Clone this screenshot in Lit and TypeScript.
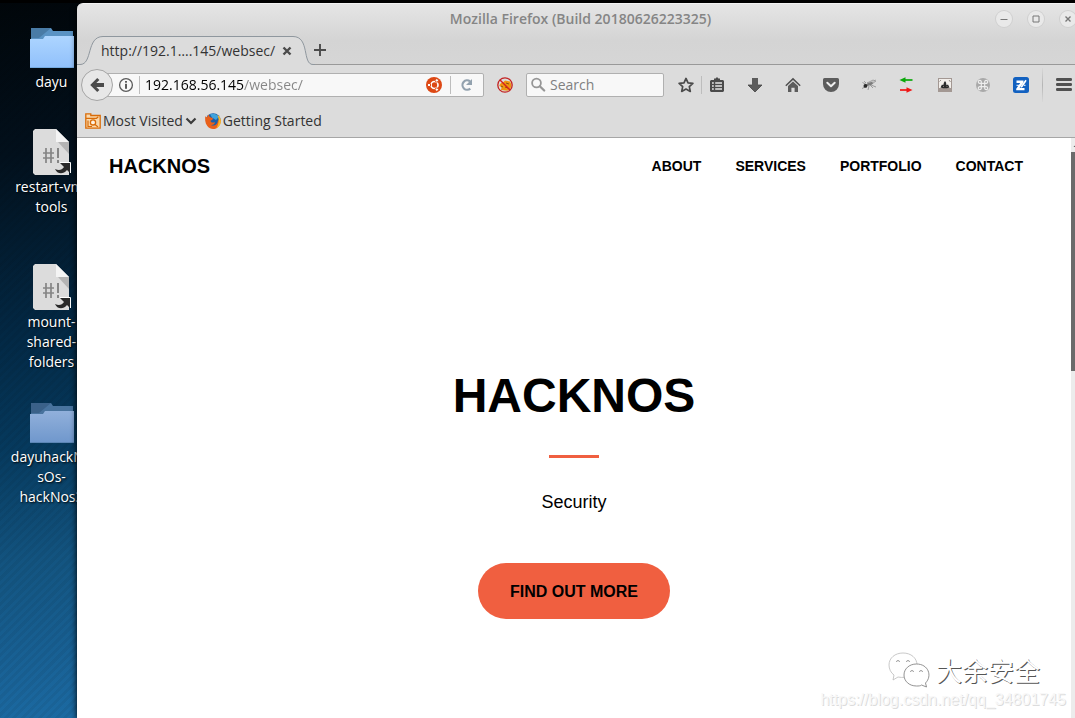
import { LitElement, html, css, svg, TemplateResult } from "lit";
import { customElement } from "lit/decorators.js";

const chromeFont = css`"Open Sans", "Noto Sans", sans-serif`;

const icon = (body: unknown, size = 16): TemplateResult => html`
  <svg width=${size} height=${size} viewBox="0 0 16 16" aria-hidden="true">${body}</svg>
`;

const icons = {
  back: svg`<path d="M8.2 1 1.2 8l7 7 2.2-2.1L7.3 9.9H15V6.1H7.3l3.1-3z" fill="#4b4b4b"/>`,
  info: svg`<circle cx="8" cy="8" r="6.4" fill="none" stroke="#5a5a5a" stroke-width="1.3"/>
    <rect x="7.1" y="4" width="1.8" height="1.7" fill="#4a4a4a"/><rect x="7.1" y="6.8" width="1.8" height="5" fill="#4a4a4a"/>`,
  ubuntu: svg`<circle cx="8" cy="8" r="8" fill="#dd4814"/>
    <circle cx="8.5" cy="8" r="3.5" fill="none" stroke="#fff" stroke-width="1.7"/>
    <g stroke="#dd4814" stroke-width="1"><circle cx="3" cy="8" r="1.7" fill="#fff"/>
    <circle cx="10.8" cy="3.4" r="1.7" fill="#fff"/><circle cx="10.8" cy="12.6" r="1.7" fill="#fff"/></g>`,
  reload: svg`<path d="M11.300 11.600A4.700 4.700 0 1 1 11 4.300" fill="none" stroke="#92a1ae" stroke-width="2.200"/>
    <path d="M13 2v6H7z" fill="#92a1ae"/>`,
  noscript: svg`<path d="M2.200 8.500 4 6l2-.5L8 3.500l5 1L14.500 8l-1 3.500-3 2.300L4 13l.5-2.500z" fill="#f09410"/>
    <path d="m4 9 2 1m3-4 3 1m-4 3 3 1" stroke="#8b520b" stroke-width="1"/>
    <circle cx="8" cy="8" r="7.200" fill="none" stroke="#c32222" stroke-width="1.300"/>
    <path d="m3 3 10 10" stroke="#d42020" stroke-width="1.400"/>`,
  search: svg`<circle cx="5.500" cy="6" r="4.400" fill="none" stroke="#979797" stroke-width="1.800"/>
    <path d="m8.800 9.200 4.400 4.300" stroke="#979797" stroke-width="2.300" stroke-linecap="round"/>`,
  star: svg`<path d="m8 1.400 2 4.400 4.900.5-3.600 3.300 1 4.800L8 12l-4.300 2.400 1-4.800L1.100 6.300 6 5.800z" fill="none" stroke="#4b4b4b" stroke-width="1.700" stroke-linejoin="round"/>`,
  list: svg`<path d="M2 3h3V1.600h1.600L8 0l1.400 1.600H11V3h3l1 1v10l-1 1H2l-1-1V4z" fill="#4b4b4b"/>
    <path d="M3 6h1.800M6.200 6H13M3 9h1.800M6.200 9H13M3 12h1.800m1.400 0H13" stroke="#e6e6e6" stroke-width="1.500"/>`,
  download: svg`<path d="M5 1h6v7h4l-7 7-7-7h4z" fill="#5c5c5c"/><path d="M1 8h4m6 0h4l-7 7-7-7" fill="none" stroke="#454545" stroke-width=".8"/>`,
  home: svg`<path d="M8 .8.300 8.200l1 1L8 2.900l6.700 6.300 1-1z" fill="#505050"/>
    <path d="M8 4.400 3 9v6h3.400v-4.200h3.200V15H13V9z" fill="#5c5c5c"/>`,
  pocket: svg`<path d="M1.500 1h13A1.500 1.500 0 0 1 16 2.500V7a8 8 0 0 1-16 0V2.500A1.500 1.500 0 0 1 1.500 1z" fill="#5c5c5c"/>
    <path d="m4.300 5.800 3.700 3.500 3.700-3.500" fill="none" stroke="#eee" stroke-width="2" stroke-linecap="round" stroke-linejoin="round"/>`,
  fly: svg`<path d="M6 8 1.500 5.500M6 9l-5 2.500M8 9l-1 4M10 8l5 2M9 8l3 3M5 6 3 4.200M12 5l2.500-2" stroke="#8a8a8a" stroke-width=".8"/>
    <path d="M6 6 12 3l3 1-4 3z" fill="#c2c2c2" stroke="#888" stroke-width=".6"/>
    <ellipse cx="8.500" cy="7" rx="3.600" ry="1.400" fill="#7c7c7c" transform="rotate(-22 8.500 7)"/>
    <circle cx="4.400" cy="8.900" r="1.900" fill="#292929"/>`,
  swap: svg`<path d="M13.500 3H5" stroke="#0aa80a" stroke-width="1.700"/><path d="M.5 3 6.500.200v5.600z" fill="#0aa80a"/>
    <path d="M1 13h8" stroke="#f01515" stroke-width="1.700"/><path d="m13.500 13-6-2.800v5.600z" fill="#f01515"/>`,
  photo: svg`<rect x="1" y="1" width="14" height="14" fill="#a39893"/><rect x="2" y="2" width="12" height="9" fill="#f2eeea"/>
    <path d="M3.500 10.500 5 7.500l1.200.8L7 5.500l1-1.500 1 1.500.5 2.800 1.500-.8 1.500 3-2.500.8h-4z" fill="#2a2a2a"/>
    <path d="M2.500 4.500 4 3m8 0 1.500 2M6 9.500h1m2.500 0h1" stroke="#8d8580" stroke-width=".9"/>`,
  command: svg`<circle cx="8" cy="8" r="7" fill="#a9a9a9"/>
    <path d="M6.300 6.300H5a1.500 1.500 0 1 1 1.300-1.300v6A1.500 1.500 0 1 1 5 9.700h6a1.500 1.500 0 1 1-1.300 1.300V5A1.500 1.500 0 1 1 11 6.300z" fill="none" stroke="#eee" stroke-width="1.200"/>`,
  notes: svg`<rect width="16" height="16" rx="2.500" fill="#1261c0"/>
    <path d="M3.500 3.500h7V5.400L6.500 11h5v2.200H3.200v-1.500L7.200 6H3.500z" fill="#fff"/>
    <path d="m12.300 2.800 1.400 1-4.200 6.200-1.900.9.400-2z" fill="#fff"/><path d="M3.500 8.300h3m4.500 0h1.500" stroke="#fff"/>`,
  menu: svg`<g fill="#505050"><rect y="1" width="16" height="3" rx="1.200"/><rect y="6" width="16" height="3" rx="1.200"/><rect y="11" width="16" height="3" rx="1.200"/></g>`,
  visited: svg`<path d="M.8 2.200V.800h5v1.700h9.400v12.700H.800z" fill="#fad9ad" stroke="#d86b08" stroke-width="1.300"/>
    <path d="M1 5.300h10.500l1.800-1.500" fill="none" stroke="#d86b08" stroke-width="1.200"/>
    <circle cx="8" cy="9.400" r="2.600" fill="#fff3e2" stroke="#d86b08" stroke-width="1.300"/><path d="m10 11.500 3 2.500M3 7.500v6h4" fill="none" stroke="#d86b08" stroke-width="1.200"/>`,
  firefox: svg`<circle cx="8.200" cy="7.600" r="7.400" fill="#1b5fa8"/><path d="M5 1.300c4-1.500 7.500.2 8.500 2.700L11 7 7 4.500z" fill="#3fa3dc"/>
    <path d="M.3 3.300 2 4.500C2.500 3 3.200 2 4 1.500c0 1.500.5 2.500 2 3l2 .8-.6 1.500-2 .9c.5 2 3 2.300 4.600 1.300 0 2-2 3.300-4 3 3 1.500 6.500 0 7-4.500l2.700-1C16 12 12.500 16 8 16S-.8 11.500.3 3.300z" fill="#e9601a"/>
    <path d="M12.300 1.800c3 2 4.200 5.200 3.300 8.700-.5 2-2.500 4-4.400 4.900 2.500-4 3.500-8.500 1.100-13.600z" fill="#fbb628"/>`,
  close: svg`<path d="m4.500 4.500 7 7m0-7-7 7" stroke="#4b4b4b" stroke-width="2.400"/>`,
  plus: svg`<path d="M8 2v12M2 8h12" stroke="#4b4b4b" stroke-width="1.900"/>`,
};

const chevron = html`
  <svg width="12" height="12" viewBox="0 0 12 12" aria-hidden="true">
    <path d="m1.500 3.500 4.500 4.500 4.500-4.500" fill="none" stroke="#3c3c3c" stroke-width="2.200" />
  </svg>`;

const folder = (id: string, top: string, bottom: string, flap: string, shade: string) => html`
  <svg width="44" height="40" viewBox="0 0 44 40" aria-hidden="true">
    <defs><linearGradient id=${id} x2="0" y2="1">
      <stop stop-color=${top} /><stop offset="1" stop-color=${bottom} />
    </linearGradient></defs>
    <path d="M1 0h20l2 3h20v20H1z" fill=${flap} />
    <path d="M1 0h20L9 10H1z" fill=${shade} />
    <path d="M0 11h13l2-3h29v32H0z" fill="url(#${id})" />
    <path d="M0 39.500h44" stroke=${flap} stroke-opacity=".5" />
  </svg>`;

const script = html`
  <svg width="38" height="48" viewBox="0 0 38 48" aria-hidden="true">
    <path d="M2 0h21l13 13v33H2l-2-2V2z" fill="#dcdcdc" />
    <path d="M23 0v13h13z" fill="#f4f4f4" /><path d="M25 13h11v12z" fill="#b4b4b4" />
    <path d="M13 19v15m5-15v15M10 24h11M10 29h11" stroke="#858585" stroke-width="1.700" />
    <path d="M25 19v10m0 2v3" stroke="#858585" stroke-width="2" />
    <path d="M27 34h10v10l-3-3c-4 5-10 4-12-1 4 2 7 1 9-2z" fill="#292929" />
    <path d="M27 33.500h10.500V44" fill="none" stroke="#fff" />
  </svg>`;

@customElement("desktop-icons")
class DesktopIcons extends LitElement {
  static styles = css`
    :host { display: block; }
    .items {
      list-style: none; margin: 0; padding: 23px 0 0; width: 103px;
      display: grid; grid-template-rows: 105px 135px 135px auto;
      font: 14px/20px ${chromeFont}; color: #fff; text-align: center;
      text-shadow: 1px 1px 2px #000;
    }
    .art { height: 49px; display: flex; justify-content: center; align-items: center; }
    .label { white-space: pre-line; }
  `;
  render() {
    const items = [
      { art: folder("bright", "#add5ff", "#90c0fb", "#5a93c4", "#497ba6"), label: "dayu" },
      { art: script, label: "restart-vm-\ntools" },
      { art: script, label: "mount-\nshared-\nfolders" },
      { art: folder("dim", "#91b0db", "#6f97cc", "#48739e", "#3a6189"), label: "dayuhackNo\nsOs-\nhackNos3" },
    ];
    return html`<ul class="items">${items.map((i) => html`
      <li><div class="art">${i.art}</div><div class="label">${i.label}</div></li>`)}</ul>`;
  }
}

@customElement("browser-chrome")
class BrowserChrome extends LitElement {
  static styles = css`
    :host { display: block; font: 14px/20px ${chromeFont}; color: #333; }
    button { border: 0; padding: 0; background: none; font: inherit; color: inherit; display: grid; place-items: center; }
    svg { display: block; flex: none; }
    input { border: 0; outline: 0; padding: 0; background: none; font: inherit; min-width: 0; }
    .top { background: linear-gradient(#e5e5e5, #d4d4d4 60%, #d6d6d6); border-top: 1px solid #f2f2f2; border-radius: 6px 6px 0 0; }
    .titlebar { display: grid; grid-template-columns: 1fr auto 1fr; align-items: center; height: 30px; }
    .title { grid-column: 2; font-weight: 600; color: #858585; }
    .controls { display: flex; justify-content: flex-end; gap: 16px; padding-right: 8px; }
    .control { width: 16px; height: 16px; border-radius: 50%; background: #e9e9e9; box-shadow: 0 0 0 1px #d0d0d0; }
    .tabs { display: flex; align-items: center; height: 31px; box-shadow: inset 0 -1px #999; }
    .tab { position: relative; display: flex; align-items: center; gap: 4px; width: 235px; height: 31px; box-sizing: border-box; padding: 2px 17px 0 24px; }
    .tab-shape { position: absolute; left: 0; top: 0; }
    .tab-title { position: relative; flex: 1; white-space: nowrap; }
    .tab-close { position: relative; }
    .toolbar { display: flex; align-items: center; height: 40px; padding: 0 8px 0 4px; background: #dcdcdc; }
    .back { position: relative; width: 32px; height: 32px; flex: none; box-sizing: border-box; border: 1px solid #a5a5a5; border-radius: 50%; background: #e7e7e7; }
    .field { display: flex; align-items: center; box-sizing: border-box; height: 24px; border: 1px solid #b0b0b0; border-radius: 2px; background: #f8f8f8; }
    .address { flex: 1; margin-left: -16px; padding: 0 8px 0 20px; }
    .url {
      flex: 1; margin-left: 5px; color: transparent; -webkit-background-clip: text; background-clip: text;
      background-image: linear-gradient(to right, #000 0 99px, #858585 99px);
    }
    .rule { width: 1px; height: 18px; flex: none; background: #bdbdbd; }
    .address .rule.first { margin-left: 5px; }
    .address .rule.last { margin: 0 8px; }
    .tool { width: 24px; height: 24px; flex: none; }
    .plugin { margin: 0 9px; }
    .search { width: 138px; padding: 0 4px; gap: 3px; }
    .query { width: 100%; }
    .query::placeholder { color: #808080; opacity: 1; }
    .star { margin-left: 10px; }
    .toolbar > .rule { margin: 0 3px; }
    .toolbar > .rule.tall { height: 34px; margin: 0 9px; background: linear-gradient(#d8d8d8, #b5b5b5, #d8d8d8); }
    .tools { display: flex; gap: 14px; }
    .bookmarks { display: flex; align-items: center; height: 32px; padding: 0 8px; gap: 8px; background: #dcdcdc; border-bottom: 1px solid #a6a6a6; }
    .bookmark { display: flex; align-items: center; gap: 2px; color: inherit; text-decoration: none; }
  `;
  render() {
    const tools: [string, unknown][] = [
      ["Bookmarks list", icons.list], ["Downloads", icons.download], ["Home", icons.home],
      ["Pocket", icons.pocket], ["Firebug", icons.fly], ["Proxy", icons.swap],
      ["Photo", icons.photo], ["Commands", icons.command], ["Notes", icons.notes],
    ];
    return html`
      <div class="top">
        <div class="titlebar">
          <span class="title">Mozilla Firefox (Build 20180626223325)</span>
          <div class="controls">
            <button class="control" aria-label="Minimize">${icon(svg`<path d="M4.500 8.500h7" stroke="#777"/>`)}</button>
            <button class="control" aria-label="Maximize">${icon(svg`<path d="M5 5h6v6H5z" fill="none" stroke="#777"/>`)}</button>
            <button class="control" aria-label="Close">${icon(svg`<path d="m5.500 5.500 5 5m0-5-5 5" stroke="#777" stroke-width="1.400"/>`)}</button>
          </div>
        </div>
        <div class="tabs">
          <div class="tab">
            <svg class="tab-shape" width="238" height="31" viewBox="0 0 238 31" aria-hidden="true">
              <path d="M0 30.500h3C16 30.500 9 2.500 26 2.500h190c17 0 9 28 20 28h2V31H0z" fill="#dcdcdc" />
              <path d="M0 30.500h3C16 30.500 9 2.500 26 2.500h190c17 0 9 28 20 28h2" fill="none" stroke="#8f979e" />
            </svg>
            <span class="tab-title">http://192.1….145/websec/</span>
            <button class="tab-close" aria-label="Close tab">${icon(icons.close)}</button>
          </div>
          <button class="tab-new" aria-label="New tab">${icon(icons.plus)}</button>
        </div>
      </div>
      <div class="toolbar">
        <button class="back" aria-label="Back">${icon(icons.back)}</button>
        <div class="field address">
          ${icon(icons.info)}
          <span class="rule first"></span>
          <input class="url" aria-label="Address" .value=${"192.168.56.145/websec/"} />
          ${icon(icons.ubuntu)}
          <span class="rule last"></span>
          ${icon(icons.reload)}
        </div>
        <button class="tool plugin" aria-label="NoScript">${icon(icons.noscript)}</button>
        <div class="field search">
          ${icon(icons.search)}
          <input class="query" aria-label="Search" placeholder="Search" />
        </div>
        <button class="tool star" aria-label="Bookmark this page">${icon(icons.star)}</button>
        <span class="rule"></span>
        <div class="tools">${tools.map(([name, art]) => html`
          <button class="tool" aria-label=${name}>${icon(art)}</button>`)}</div>
        <span class="rule tall"></span>
        <button class="tool" aria-label="Menu">${icon(icons.menu)}</button>
      </div>
      <div class="bookmarks">
        <button class="bookmark">${icon(icons.visited)}<span>Most Visited</span>${chevron}</button>
        <a class="bookmark" href="#">${icon(icons.firefox)}<span>Getting Started</span></a>
      </div>`;
  }
}

@customElement("hacknos-page")
class HacknosPage extends LitElement {
  static styles = css`
    :host { display: block; background: #fff; color: #000; font-family: "Liberation Sans", Arial, sans-serif; }
    a { color: inherit; text-decoration: none; }
    .nav { display: flex; justify-content: space-between; align-items: center; height: 56px; padding: 0 48px 0 32px; font-weight: 700; }
    .brand { font-size: 20px; }
    .links { display: flex; gap: 34px; font-size: 14px; }
    .hero { display: flex; flex-direction: column; align-items: center; padding-top: 172px; }
    h1 { margin: 0; font-size: 48px; line-height: 60px; }
    .divider { width: 50px; height: 3px; margin: 29px 0 31px; border: 0; background: #f05f40; }
    p { margin: 0 0 47px; font-size: 18px; line-height: 27px; }
    .more { padding: 17px 32px 15px; border-radius: 28px; background: #f05f40; font-size: 16px; line-height: 24px; font-weight: 700; }
  `;
  render() {
    return html`
      <nav class="nav">
        <a class="brand" href="#">HACKNOS</a>
        <div class="links">${["ABOUT", "SERVICES", "PORTFOLIO", "CONTACT"].map((t) => html`<a href="#">${t}</a>`)}</div>
      </nav>
      <main class="hero">
        <h1>HACKNOS</h1>
        <hr class="divider" />
        <p>Security</p>
        <a class="more" href="#">FIND OUT MORE</a>
      </main>`;
  }
}

@customElement("app-root")
class AppRoot extends LitElement {
  static styles = css`
    :host {
      position: relative; display: grid; grid-template-columns: 77px minmax(0, 1fr);
      height: 100vh; overflow: hidden;
      background:
        linear-gradient(#000 3px, transparent 3px),
        repeating-linear-gradient(135deg, rgba(0, 0, 0, 0.05) 0 3px, transparent 3px 6px),
        linear-gradient(172deg, #01060a 0, #02101c 18%, #032a47 40%, #063a5e 52%, #135480 65%, #1a659b 80%, #2180c0 100%);
    }
    .window {
      position: relative; display: flex; flex-direction: column; min-height: 0;
      margin: 3px -9px 0 0; border-radius: 6px 6px 0 0; box-shadow: 0 0 6px 0 #000;
    }
    .view { flex: 1; min-height: 0; display: grid; grid-template-columns: minmax(0, 1fr) 13px; overflow: hidden; background: #fff; }
    .scrollbar { background: #ececec; }
    .arrow { display: block; }
    .thumb { height: 219px; background: #6b6b6b; }
    .watermark { position: absolute; right: 9px; bottom: 7px; display: grid; justify-items: end; pointer-events: none; }
    .badge { display: flex; align-items: center; gap: 6px; margin-right: 26px; }
    .name {
      font: 26px/38px "Noto Sans CJK SC", sans-serif; color: #fff;
      text-shadow: 1px 1px 0 #555;
    }
    .source { font: 16px/22px "Liberation Sans", Arial, sans-serif; color: #f8f8f8; text-shadow: 1px 1px 0 #dcdcdc; }
  `;
  render() {
    return html`
      <desktop-icons></desktop-icons>
      <div class="window">
        <browser-chrome></browser-chrome>
        <div class="view">
          <hacknos-page></hacknos-page>
          <div class="scrollbar">
            <svg class="arrow" width="13" height="14" viewBox="0 0 13 14" aria-hidden="true"><path d="M2.500 9h8l-4-4z" fill="#555" /></svg>
            <div class="thumb"></div>
          </div>
        </div>
      </div>
      <div class="watermark">
        <div class="badge">
          <svg width="42" height="36" viewBox="0 0 42 36" aria-hidden="true">
            <g fill="#fff" stroke-width=".8">
              <path d="M15 1C7 1 1 6 1 13c0 4 2 8 5 10l-1 5 5-3c9 2 19-3 19-12C29 6 23 1 15 1z" stroke="#bbb" />
              <path d="M28.500 12C21 12 16 17 16 23s5 11 12.500 11c2 0 4 0 5-1l5 2-1-4c7-7 3-19-9-19z" stroke="#777" />
              <path d="M8.500 10a1.500 1.500 0 0 1 3 0m7 0a1.500 1.500 0 0 1 3 0M22.500 20a1.500 1.500 0 0 1 3 0m6 0a1.500 1.500 0 0 1 3 0" fill="none" stroke="#888" />
            </g>
          </svg>
          <span class="name">大余安全</span>
        </div>
        <span class="source">https://blog.csdn.net/qq_34801745</span>
      </div>`;
  }
}
